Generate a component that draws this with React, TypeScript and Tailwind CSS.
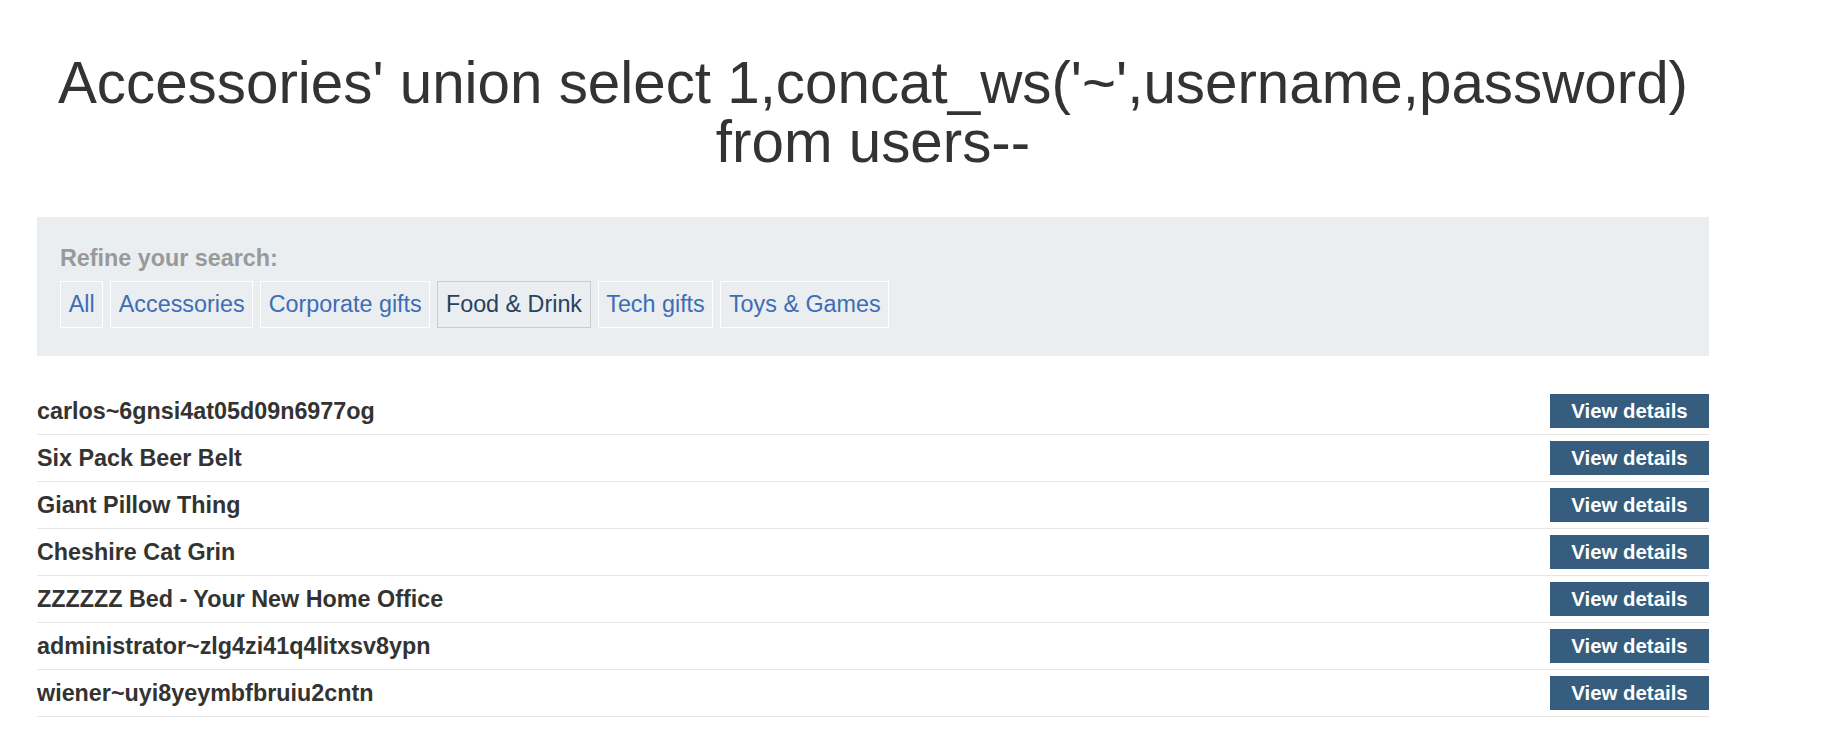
import React from "react";

const filters = [
  { label: "All", active: false },
  { label: "Accessories", active: false },
  { label: "Corporate gifts", active: false },
  { label: "Food & Drink", active: true },
  { label: "Tech gifts", active: false },
  { label: "Toys & Games", active: false },
];

const rows = [
  "carlos~6gnsi4at05d09n6977og",
  "Six Pack Beer Belt",
  "Giant Pillow Thing",
  "Cheshire Cat Grin",
  "ZZZZZZ Bed - Your New Home Office",
  "administrator~zlg4zi41q4litxsv8ypn",
  "wiener~uyi8yeymbfbruiu2cntn",
];

export default function App() {
  return (
    <div
      className="min-h-[753px] bg-white text-[#333332]"
      style={{ fontFamily: '"Liberation Sans", Arial, sans-serif' }}
    >
      <div className="ml-[37px] w-[1672px] pt-[53px]">
        <h1 className="text-center text-[58.33px] leading-[59px] font-normal text-[#333332]">
          Accessories' union select 1,concat_ws('~',username,password)
          <br />
          from users--
        </h1>

        <section className="mt-[46px] bg-[#eaeef1] pl-[23px] pt-[27.5px] pb-[28.5px]">
          <div className="text-[23.33px] leading-[27px] font-bold text-[#999999]">
            Refine your search:
          </div>
          <div className="mt-[9.5px] flex gap-[6.8px]">
            {filters.map((f) => (
              <a
                key={f.label}
                className={
                  f.active
                    ? "flex h-[46.7px] items-center border border-[#c8cdd2] px-[7.7px] text-[23.33px] text-[#29425f]"
                    : "flex h-[46.7px] items-center border border-white px-[7.7px] text-[23.33px] text-[#3d6db4]"
                }
              >
                {f.label}
              </a>
            ))}
          </div>
        </section>

        <div className="mt-[32px]">
          {rows.map((r) => (
            <div
              key={r}
              className="flex h-[47px] items-center justify-between border-b border-[#e6e6e6]"
            >
              <span className="text-[23.33px] font-bold text-[#333332]">{r}</span>
              <button className="flex h-[33.7px] w-[159px] items-center justify-center bg-[#365c7e] text-[20.4px] font-bold text-white">
                View details
              </button>
            </div>
          ))}
        </div>
      </div>
    </div>
  );
}
